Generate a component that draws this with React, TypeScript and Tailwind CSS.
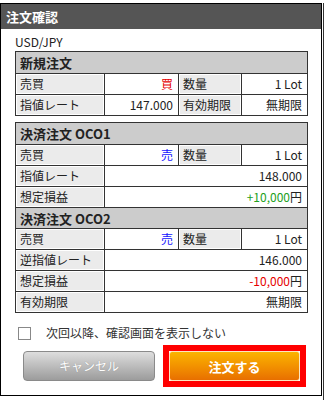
import React from 'react';

type Cell = { text: React.ReactNode; label?: boolean };

function LabelCell({ children, span }: { children: React.ReactNode; span?: boolean }) {
  return (
    <div
      className={`bg-[#ebebeb] border border-white pl-[3px] flex items-center ${span ? '' : ''}`}
    >
      {children}
    </div>
  );
}

function ValueCell({ children, span }: { children: React.ReactNode; span?: boolean }) {
  return (
    <div className={`bg-white flex items-center justify-end pr-[5px] border-l border-[#333] ${span ? 'col-span-3' : ''}`}>
      {children}
    </div>
  );
}

function Row4({ a, b, c, d }: { a: string; b: React.ReactNode; c: string; d: React.ReactNode }) {
  return (
    <div className="grid grid-cols-[88px_74px_63px_1fr] h-[21px] border-t border-[#333]">
      <LabelCell>{a}</LabelCell>
      <ValueCell>{b}</ValueCell>
      <div className="border-l border-[#333] flex">
        <div className="flex-1 bg-[#ebebeb] border border-white pl-[3px] flex items-center">{c}</div>
      </div>
      <ValueCell>{d}</ValueCell>
    </div>
  );
}

function Row2({ a, b }: { a: string; b: React.ReactNode }) {
  return (
    <div className="grid grid-cols-[88px_74px_63px_1fr] h-[21px] border-t border-[#333]">
      <LabelCell>{a}</LabelCell>
      <ValueCell span>{b}</ValueCell>
    </div>
  );
}

function SectionHead({ title, first }: { title: string; first?: boolean }) {
  return (
    <div className={`h-[21px] bg-[#cccccc] flex items-center pl-[4px] font-bold text-[13px] ${first ? '' : 'border-t border-[#333]'}`}>
      {title}
    </div>
  );
}

export default function App() {
  return (
    <div className="w-[328px] h-[400px] bg-white text-[#222] font-['Noto_Sans_CJK_JP','Noto_Sans',sans-serif] text-[12px] leading-none">
      <div className="flex items-start pt-[3px]">
        <div className="w-[322px] h-[393px] border border-black flex flex-col">
          <div className="h-[25px] bg-[#555555] text-white font-bold text-[13px] flex items-center pl-[5px]">
            注文確認
          </div>

          <div className="pl-[14px] pr-[13px]">
            <div className="pt-[5px] leading-[16px] h-[22px]">USD/JPY</div>

            <div className="border border-[#333]">
              <SectionHead title="新規注文" first />
              <Row4 a="売買" b={<span className="text-[#e60000]">買</span>} c="数量" d="1 Lot" />
              <Row4 a="指値レート" b="147.000" c="有効期限" d="無期限" />
            </div>

            <div className="border border-[#333] mt-[6px]">
              <SectionHead title="決済注文 OCO1" first />
              <Row4 a="売買" b={<span className="text-[#1414ff]">売</span>} c="数量" d="1 Lot" />
              <Row2 a="指値レート" b="148.000" />
              <Row2
                a="想定損益"
                b={
                  <span>
                    <span className="text-[#22a022]">+10,000</span>円
                  </span>
                }
              />
              <SectionHead title="決済注文 OCO2" />
              <Row4 a="売買" b={<span className="text-[#1414ff]">売</span>} c="数量" d="1 Lot" />
              <Row2 a="逆指値レート" b="146.000" />
              <Row2
                a="想定損益"
                b={
                  <span>
                    <span className="text-[#e60000]">-10,000</span>円
                  </span>
                }
              />
              <Row2 a="有効期限" b="無期限" />
            </div>

            <div className="flex items-center mt-[13px] h-[14px]">
              <div className="ml-[3px] w-[13px] h-[13px] border border-[#888] bg-white" />
              <span className="ml-[15px] text-[#333]">次回以降、確認画面を表示しない</span>
            </div>

            <div className="flex items-center mt-[5px]">
              <button className="ml-[8px] w-[132px] h-[30px] rounded-[4px] border border-[#8a8a8a] bg-gradient-to-b from-[#dedede] to-[#9c9c9c] text-white text-[12px] [text-shadow:0_0_1px_#888]">
                キャンセル
              </button>
              <div className="ml-[8px] border-[6px] border-[#ff0000] p-[0px]">
                <button className="w-[131px] h-[30px] rounded-[3px] border border-[#fde6c0] bg-gradient-to-b from-[#fbb400] to-[#e86f00] text-white font-bold text-[13px]">
                  注文する
                </button>
              </div>
            </div>
          </div>
        </div>
        <div className="ml-[1px] w-px h-[397px] bg-[#333]" />
      </div>
    </div>
  );
}
